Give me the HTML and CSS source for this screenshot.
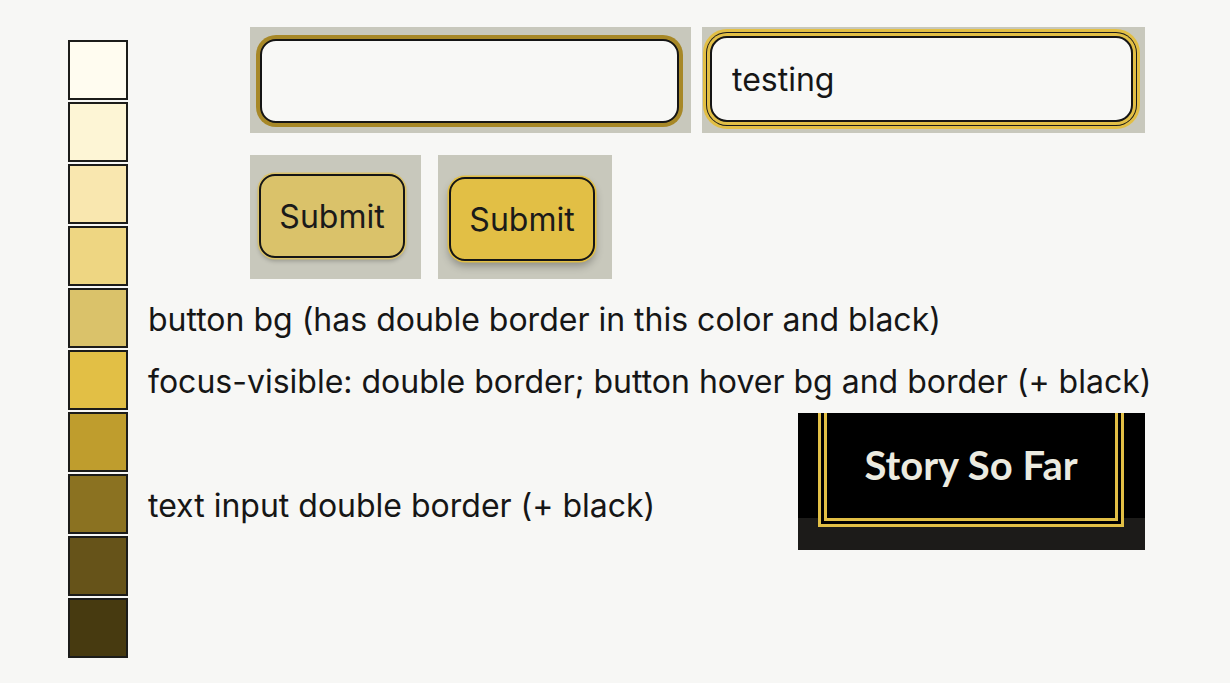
FILE: index.html
```html
<!DOCTYPE html>
<html lang="en">
<head>
    <meta charset="UTF-8" />
    <title>Palette</title>
    <link rel="stylesheet" href="styles.css">
</head>
<body>
    <div class="board">
        <div class="swatches">
            <div class="swatch c1"></div>
            <div class="swatch c2"></div>
            <div class="swatch c3"></div>
            <div class="swatch c4"></div>
            <div class="swatch c5"></div>
            <div class="swatch c6"></div>
            <div class="swatch c7"></div>
            <div class="swatch c8"></div>
            <div class="swatch c9"></div>
            <div class="swatch c10"></div>
        </div>

        <div class="demos">
            <div class="inputs">
                <div class="well well-input">
                    <input class="field" type="text" value="">
                </div>
                <div class="well well-input focus">
                    <input class="field" type="text" value="testing">
                </div>
            </div>
            <div class="buttons">
                <div class="well well-btn">
                    <button class="btn">Submit</button>
                </div>
                <div class="well well-btn hover">
                    <button class="btn">Submit</button>
                </div>
            </div>
        </div>

        <div class="note row5">button bg (has double border in this color and black)</div>
        <div class="note row6">focus-visible: double border; button hover bg and border (+ black)</div>
        <div class="note row8">text input double border (+ black)</div>

        <div class="story">
            <div class="frame">Story So Far</div>
        </div>
    </div>
</body>
</html>
```

FILE: styles.css
```css
*{
    margin:0;
    padding:0;
    box-sizing:border-box;
}
body{
    background:#f7f7f5;
    font-family:"Inter", "Liberation Sans", sans-serif;
    color:#161616;
}
.board{
    display:grid;
    grid-template-columns:60px 670px 347px;
    grid-template-rows:repeat(10, 60px);
    row-gap:2px;
    padding:40px 0 0 68px;
}

/* colour column */
.swatches{
    grid-column:1;
    grid-row:1 / 11;
    display:flex;
    flex-direction:column;
    gap:2px;
}
.swatch{
    width:60px;
    height:60px;
    border:2px solid #1c1c1a;
}
.c1{ background:#fffcf0; }
.c2{ background:#fdf5d5; }
.c3{ background:#f9e7af; }
.c4{ background:#eed682; }
.c5{ background:#dac26a; }
.c6{ background:#e2bf45; }
.c7{ background:#bf9d2d; }
.c8{ background:#8b7221; }
.c9{ background:#665319; }
.c10{ background:#473a10; }

/* labels */
.note{
    grid-column:2 / 4;
    display:flex;
    align-items:center;
    padding:2px 0 0 20px;
    font-size:32px;
    white-space:nowrap;
}
.row5{ grid-row:5; }
.row6{ grid-row:6; }
.row8{ grid-row:8; grid-column:2; }

/* demo widgets */
.demos{
    grid-column:2 / 4;
    grid-row:1 / 5;
    align-self:start;
    margin:-13px 0 0 122px;
    display:flex;
    flex-direction:column;
    gap:22px;
}
.inputs{
    display:flex;
    gap:11px;
}
.buttons{
    display:flex;
    gap:17px;
}
.well{
    background:#c8c8bc;
}
.well-input{
    width:441px;
    height:106px;
    padding:12px 0 0 10px;
}
.well-input.focus{
    width:443px;
    padding:9px 0 0 8px;
}
.field{
    display:block;
    width:419px;
    height:84px;
    border:2px solid #151515;
    border-radius:16px;
    background:#f8f8f6;
    box-shadow:0 0 0 4px #a78827;
    padding:0 20px;
    font-family:"Inter", "Liberation Sans", sans-serif;
    font-size:32px;
    color:#161616;
    outline:none;
}
.focus .field{
    width:423px;
    height:86px;
    border-radius:17px;
    box-shadow:0 0 0 3px #e2bf45, 0 0 0 4px #1a1a1a, 0 0 0 7px #e2bf45;
}
.well-btn{
    width:171px;
    height:124px;
    padding:19px 0 0 9px;
}
.well-btn.hover{
    width:174px;
    padding:22px 0 0 11px;
}
.btn{
    display:block;
    width:146px;
    height:84px;
    border:2px solid #151515;
    border-radius:16px;
    background:#dac26a;
    box-shadow:0 0 0 1.5px #dac26a, 0 3px 4px rgba(0,0,0,0.25);
    font-family:"Inter", "Liberation Sans", sans-serif;
    font-size:32px;
    color:#1a1a1a;
    cursor:pointer;
}
.hover .btn{
    background:#e2bf45;
    box-shadow:0 0 0 1.5px #e2bf45, 0 5px 9px rgba(0,0,0,0.3);
}

/* heading sample */
.story{
    grid-column:3;
    grid-row:7 / 10;
    align-self:start;
    margin-top:1px;
    width:347px;
    height:137px;
    overflow:hidden;
    background:linear-gradient(#000 105px, #1c1b19 105px);
}
.frame{
    margin:-10px 0 0 20px;
    width:306px;
    height:124px;
    padding-top:0;
    border:9px double #e2bf45;
    background:#000;
    display:flex;
    align-items:center;
    justify-content:center;
    font-family:"Lato", "Liberation Sans", sans-serif;
    font-weight:bold;
    font-size:40px;
    color:#ecebe0;
}
```
